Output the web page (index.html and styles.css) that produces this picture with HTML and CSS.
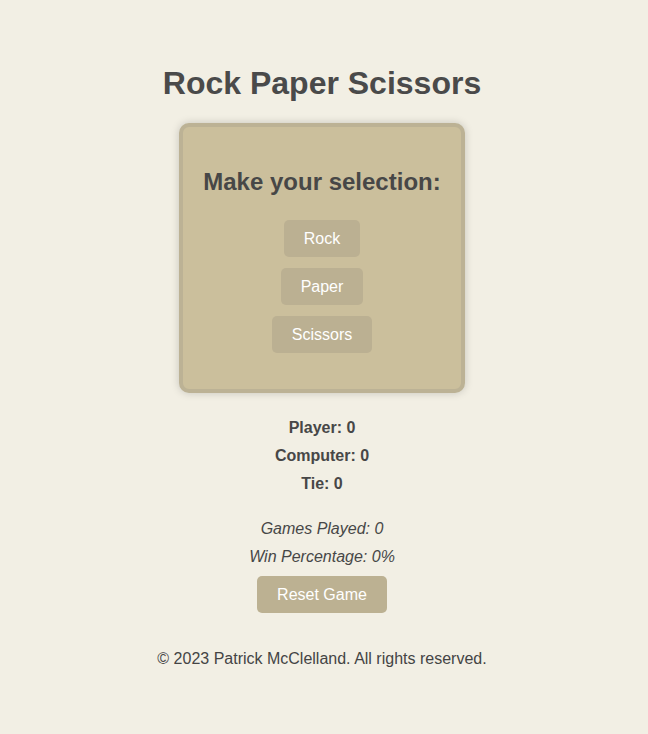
FILE: index.html
```html
<!DOCTYPE html>
<html lang="en">
<head>
<meta charset="utf-8">
<title>Rock Paper Scissors</title>
<link rel="stylesheet" href="styles.css">
</head>
<body>
<main class="page">
  <h1 class="title">Rock Paper Scissors</h1>
  <section class="card">
    <h2 class="card-title">Make your selection:</h2>
    <div class="choices">
      <button class="btn">Rock</button>
      <button class="btn">Paper</button>
      <button class="btn">Scissors</button>
    </div>
  </section>
  <div class="scores">
    <p class="score">Player: 0</p>
    <p class="score">Computer: 0</p>
    <p class="score">Tie: 0</p>
  </div>
  <div class="stats">
    <p class="stat">Games Played: 0</p>
    <p class="stat">Win Percentage: 0%</p>
  </div>
  <button class="btn reset">Reset Game</button>
  <footer class="footer">© 2023 Patrick McClelland. All rights reserved.</footer>
</main>
</body>
</html>
```
FILE: styles.css
```css
* { box-sizing: border-box; }
html, body {
  margin: 0;
  padding: 0;
  background: #f2efe4;
}
body {
  font-family: "Liberation Sans", Arial, sans-serif;
  color: #474747;
}
.page {
  display: flex;
  flex-direction: column;
  align-items: center;
  padding-top: 65px;
  padding-right: 4px;
}
.title {
  margin: 0;
  font-size: 32px;
  line-height: 37px;
  font-weight: bold;
  color: #4a4a4a;
}
.card {
  margin-top: 21px;
  width: 286px;
  height: 270px;
  background: #cbbf9c;
  border: 4px solid #bcb295;
  border-radius: 10px;
  box-shadow: 0 0 8px rgba(0, 0, 0, 0.18);
  display: flex;
  flex-direction: column;
  align-items: center;
  padding-top: 41px;
}
.card-title {
  margin: 0;
  font-size: 24px;
  line-height: 28px;
  font-weight: bold;
  color: #474747;
}
.choices {
  margin-top: 24px;
  display: flex;
  flex-direction: column;
  align-items: center;
  gap: 11px;
}
.btn {
  font-family: "Liberation Sans", Arial, sans-serif;
  font-size: 16px;
  line-height: 18px;
  color: #ffffff;
  background: #bbb092;
  border: none;
  border-radius: 5px;
  padding: 10px 20px 9px;
  height: 37px;
}
.scores {
  margin-top: 26px;
  display: flex;
  flex-direction: column;
  align-items: center;
  gap: 10px;
}
.score {
  margin: 0;
  font-size: 16px;
  line-height: 18px;
  font-weight: bold;
}
.stats {
  margin-top: 27px;
  display: flex;
  flex-direction: column;
  align-items: center;
  gap: 10px;
}
.stat {
  margin: 0;
  font-size: 16px;
  line-height: 18px;
  font-style: italic;
}
.reset {
  margin-top: 10px;
  background: #bcb192;
}
.footer {
  margin-top: 37px;
  font-size: 16px;
  line-height: 18px;
  color: #444444;
}
```
